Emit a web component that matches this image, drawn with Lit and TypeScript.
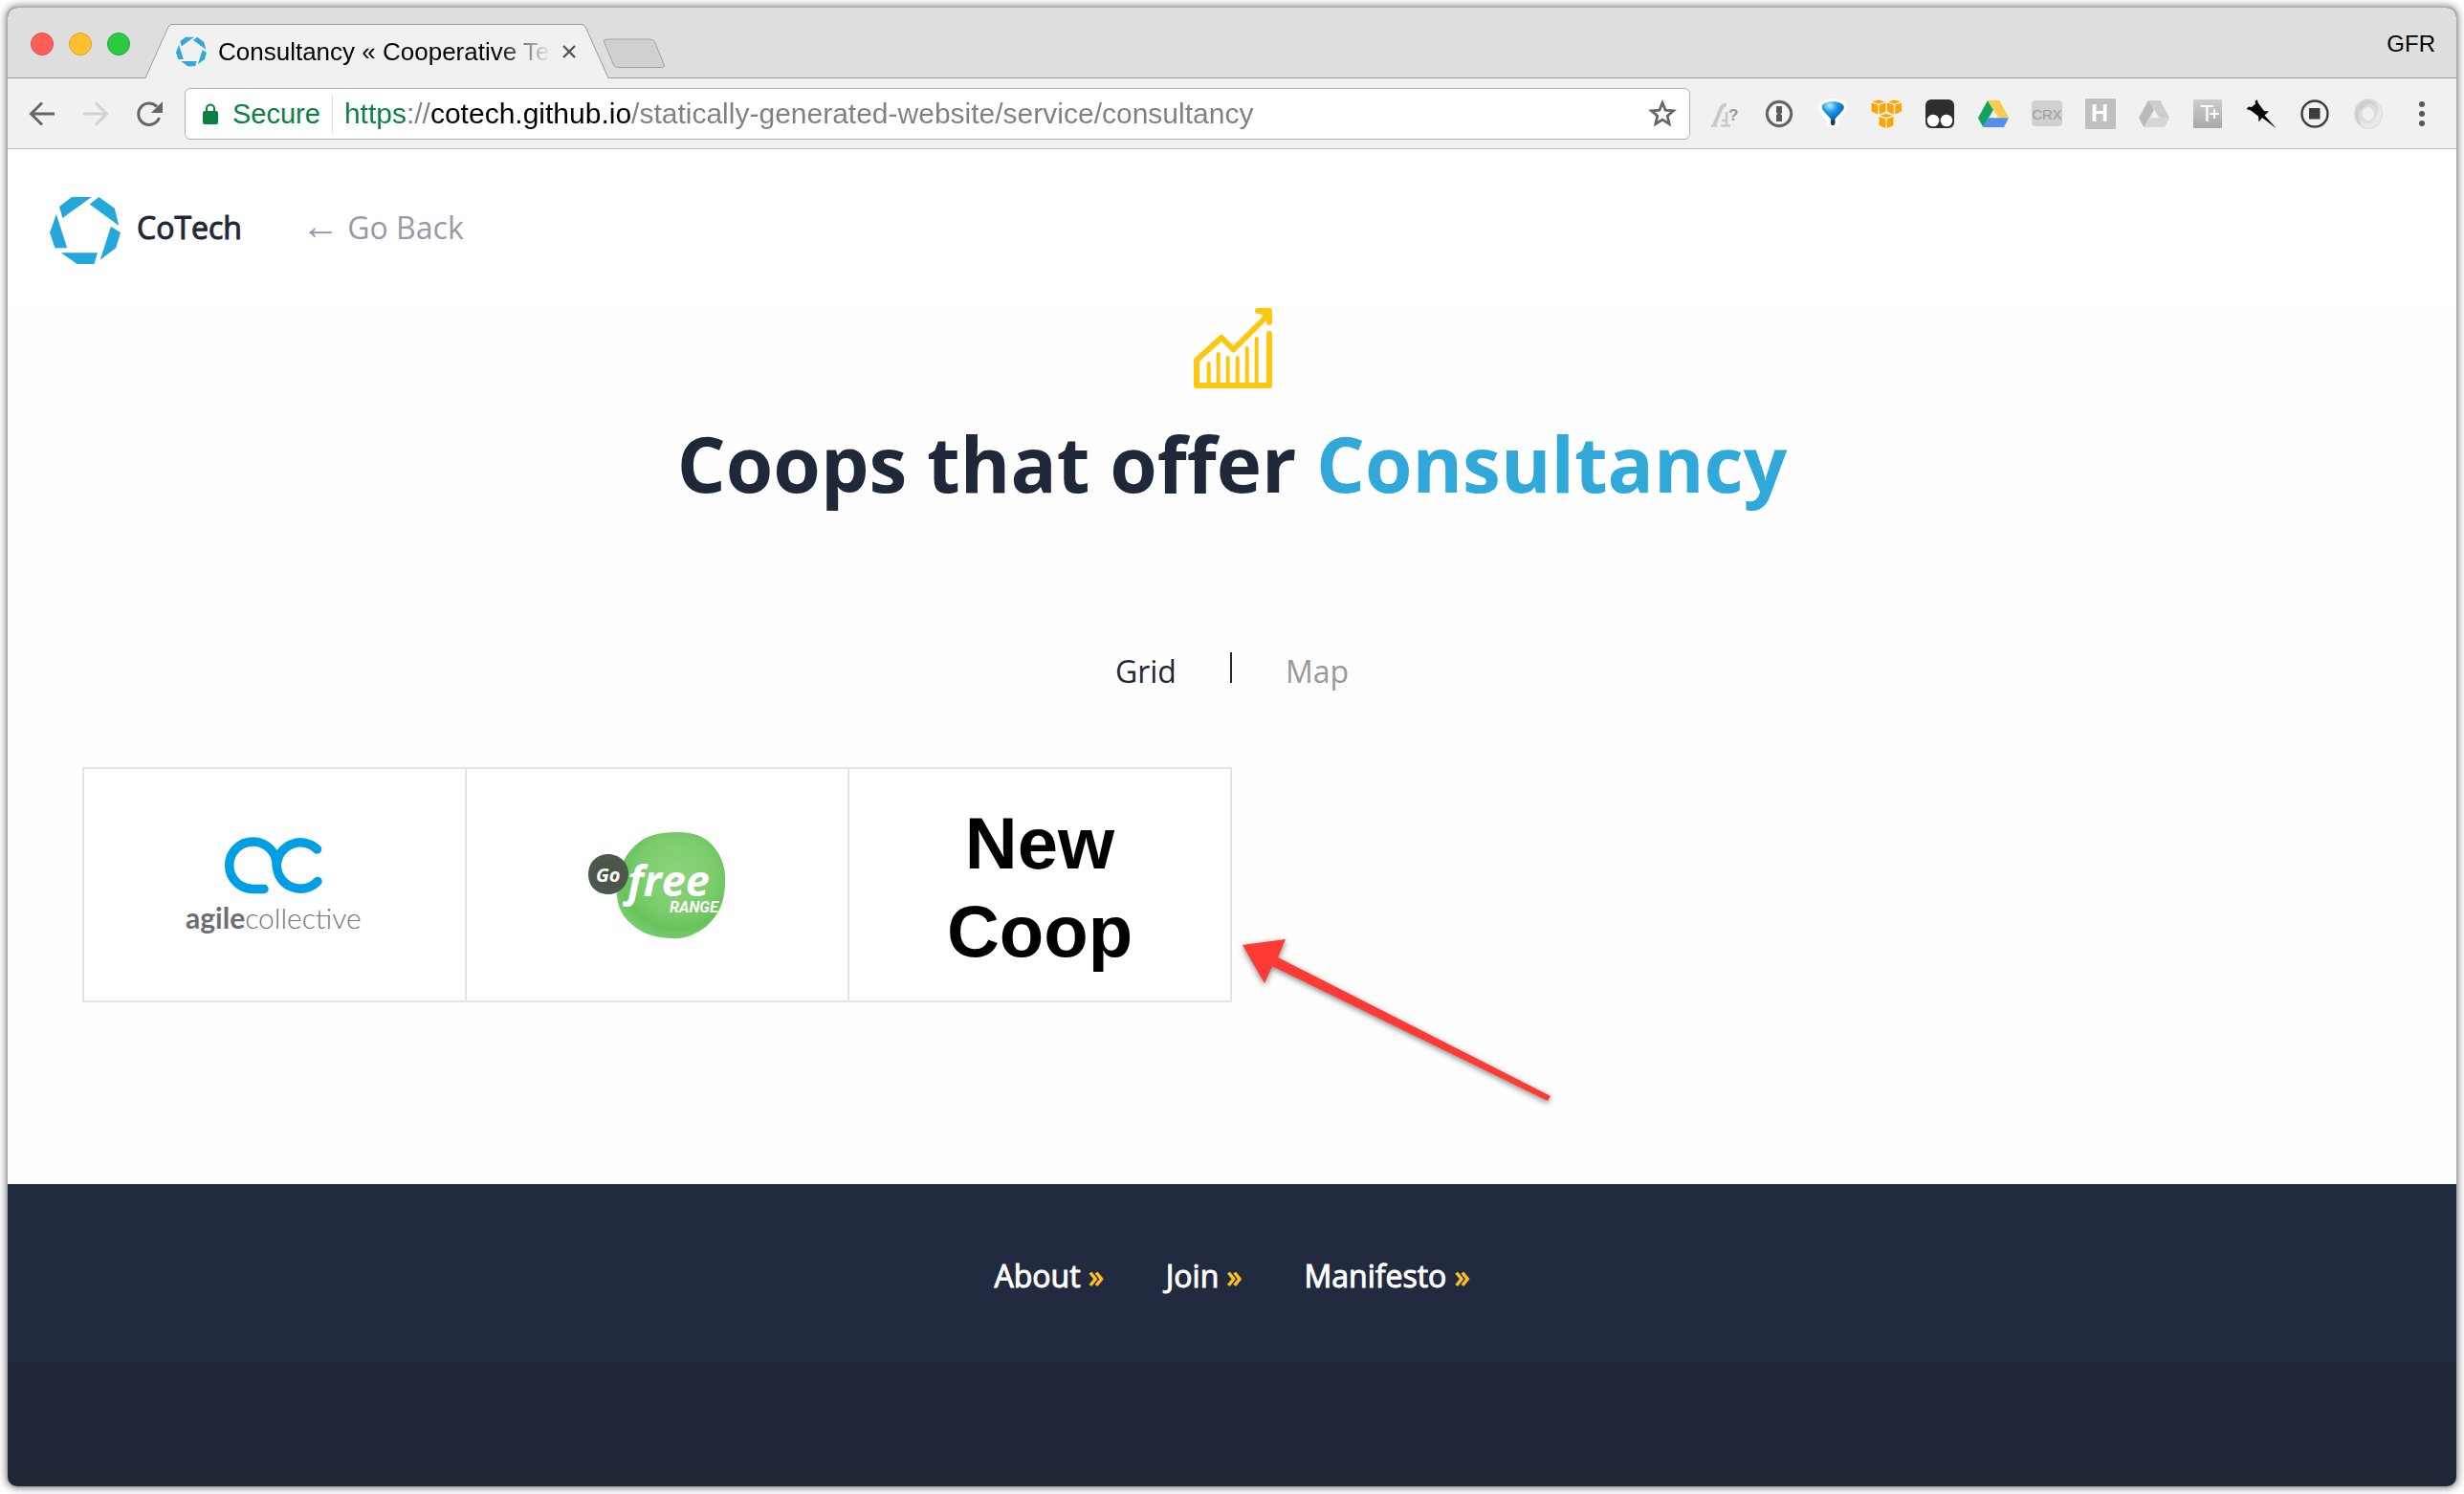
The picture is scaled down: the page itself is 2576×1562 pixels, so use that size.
import { LitElement, html, css, svg } from "lit";
import { customElement, property, state } from "lit/decorators.js";
import { classMap } from "lit/directives/class-map.js";

const ring = svg`
  <polygon points="23,0 43.7,0 13.4,22 10,10" />
  <polygon points="51.3,0 67.8,11.7 72.3,30 41.7,7.5" />
  <polygon points="64,30.7 74,37.3 69.2,53.3 52.7,65.7" />
  <polygon points="11.7,58.3 49.9,58.3 46.5,70 28.6,70" />
  <polygon points="6.9,18 18.2,53.3 5.5,53.3 0,37.3" />`;

const driveShape = (green: string, yellow: string, blue: string) => svg`
  <polygon fill=${green} points="10,2 16,12 5.3,30 0,20.3" />
  <polygon fill=${yellow} points="10,2 22.5,2 32,20 21.5,20.3" />
  <polygon fill=${blue} points="11,20.3 32,20.3 27,30 5.3,30" />`;

const cube = (x: number, y: number) => svg`
  <g transform="translate(${x} ${y})">
    <polygon points="7.5,0 14,1.8 7.5,4 1,1.8" />
    <polygon points="0,3 6.8,5.2 6.8,15 0,12" />
    <polygon points="8.2,5.2 15,3 15,12 8.2,15" />
  </g>`;

const extensions = [
  {
    name: "Font finder",
    art: svg`
      <path d="M4 28.500L11 11Q13 6.500 17 6.500" fill="none" stroke="#c9c9c9" stroke-width="4" />
      <path d="M17 14V28M12 23H18M1 28.500H7M11 28.500H21" fill="none" stroke="#c9c9c9" stroke-width="2.500" />
      <text x="19" y="23" font-size="17" font-weight="700" fill="#999">?</text>`,
  },
  {
    name: "Passwords",
    art: svg`
      <circle cx="16" cy="16" r="12.6" fill="#f7f7f7" stroke="#666" stroke-width="3.2" />
      <path d="M13 8H19V15L17.5 16L19 17.5V24H13V17L14.5 16L13 14.500Z" fill="#5c5c5c" />`,
  },
  {
    name: "Balloon",
    art: svg`
      <path d="M16 0C25 0 31 4 31 9.500C31 16 23 19 21 27Q20 31.500 16 31.500Q12 31.500 11 27C9 19 1 16 1 9.500C1 4 7 0 16 0Z" fill="#fff" />
      <path d="M16 3.300C23 3.300 27.800 6 27.800 9C27.800 14 19 18 17.500 24H15C13.500 18 4.700 14 4.700 9C4.700 6 9 3.300 16 3.300Z" fill="url(#balloon)" />
      <path d="M14 22.500H18.500V26L17.500 28H15L14 26Z" fill="#123a6b" />`,
  },
  {
    name: "Cloud services",
    art: svg`<g fill="#ffa400">${cube(0.5, 1.5)}${cube(17, 1.5)}${cube(8.5, 16)}</g>`,
  },
  {
    name: "User scripts",
    art: svg`
      <rect x="1" y="1" width="30" height="30" rx="6" fill="#2e2e2e" />
      <circle cx="9" cy="23" r="6.300" fill="#fff" />
      <circle cx="23" cy="23" r="6.300" fill="#fff" />`,
  },
  { name: "Drive", art: driveShape("#11a35f", "#fbcb4d", "#548df6") },
  {
    name: "CRX viewer",
    art: svg`
      <rect x="0" y="2" width="32" height="27" rx="4" fill="#d0d0d0" />
      <text x="16" y="21.500" font-size="15" text-anchor="middle" fill="#9c9c9c">CRX</text>`,
  },
  {
    name: "H tools",
    art: svg`
      <rect width="32" height="32" rx="1" fill="#c0c0c0" />
      <text x="15" y="24" font-size="25" font-weight="700" text-anchor="middle" fill="#fff">H</text>`,
  },
  { name: "Drive offline", art: driveShape("#bababa", "#cdcdcd", "#d6d6d6") },
  {
    name: "Text plus",
    art: svg`
      <rect x="1" y="1" width="30" height="30" fill="url(#plate)" />
      <text x="8" y="24" font-size="24" fill="#fff">T</text>
      <path d="M18 16H28M23 11V21" stroke="#fff" stroke-width="2" />`,
  },
  {
    name: "Pinboard",
    art: svg`
      <path d="M0.500 11L3 8.500L6 9L10 5.500L9.500 3L11.500 1L13 5L19 13L24 13.500L19.500 17.500L32 31.500L17 20L13.500 24.500L13 18.500L5 12.500Z" fill="#0a0a0a" />`,
  },
  {
    name: "Recorder",
    art: svg`
      <circle cx="16" cy="16" r="13.500" fill="none" stroke="#3d3d3d" stroke-width="2.400" />
      <rect x="10" y="10" width="11.500" height="11.500" fill="#3d3d3d" />`,
  },
  {
    name: "Swirl",
    art: svg`
      <ellipse cx="16" cy="16" rx="10.500" ry="11.500" fill="none" stroke="#dedede" stroke-width="9" />
      <path d="M16 1A15 15 0 0 0 8 28Q2 16 12 8Q17 4 23 8Q27 11 26 17Q29 6 16 1Z" fill="#c8c8c8" opacity="0.700" />
      <path d="M16 31A15 15 0 0 0 24 4Q30 16 20 24Q15 28 9 24Q7 30 16 31Z" fill="#e8e8e8" />`,
  },
  {
    name: "Menu",
    art: svg`
      <circle cx="16" cy="6" r="3" fill="#595959" />
      <circle cx="16" cy="16" r="3" fill="#595959" />
      <circle cx="16" cy="26" r="3" fill="#595959" />`,
  },
];

@customElement("browser-chrome")
class BrowserChrome extends LitElement {
  @property() address = "";
  @property() heading = "";

  static styles = css`
    :host {
      display: block;
      font-family: "Liberation Sans", Arial, sans-serif;
      color: #000;
    }
    button {
      border: 0;
      padding: 0;
      background: none;
      font: inherit;
      color: inherit;
      display: block;
    }
    svg {
      display: block;
      font-family: "Liberation Sans", Arial, sans-serif;
    }
    .strip {
      box-sizing: border-box;
      height: 74px;
      padding: 3px 22px 0 24px;
      display: flex;
      align-items: center;
      background: #dedede;
      border-bottom: 1px solid #999;
    }
    .lights {
      display: flex;
      gap: 16px;
    }
    .light {
      box-sizing: border-box;
      width: 24px;
      height: 24px;
      border-radius: 50%;
      border: 1px solid #e2483f;
      background: #ff5f57;
    }
    .light.min {
      background: #ffbf2f;
      border-color: #e0a023;
    }
    .light.max {
      background: #29cc41;
      border-color: #1caa2f;
    }
    .tab {
      position: relative;
      align-self: flex-end;
      box-sizing: border-box;
      width: 484px;
      height: 57px;
      margin: 0 0 -1px 16px;
      padding: 0 34px 0 32px;
      display: flex;
      align-items: center;
      gap: 12px;
    }
    .tab-shape {
      position: absolute;
      inset: 0;
    }
    .favicon,
    .tab-title,
    .close {
      position: relative;
    }
    .tab-title {
      flex: 1;
      min-width: 0;
      overflow: hidden;
      white-space: nowrap;
      font-size: 26px;
      line-height: 32px;
      mask-image: linear-gradient(to right, #000 calc(100% - 56px), transparent);
    }
    .new-tab {
      align-self: flex-end;
      margin: 0 0 9px -6px;
    }
    .profile {
      margin-left: auto;
      font-size: 24px;
      line-height: 32px;
    }
    .toolbar {
      box-sizing: border-box;
      height: 74px;
      padding: 0 20px;
      display: flex;
      align-items: center;
      gap: 21px;
      background: #f1f1f1;
      border-bottom: 1px solid #b4b4b4;
    }
    .group {
      display: flex;
      gap: 24px;
    }
    .address {
      flex: 1;
      min-width: 0;
      box-sizing: border-box;
      height: 54px;
      padding: 0 12px 0 18px;
      display: flex;
      align-items: center;
      background: #fff;
      border: 1px solid #b4b4b4;
      border-radius: 6px;
    }
    .secure {
      margin-left: 15px;
      font-size: 29px;
      line-height: 36px;
      color: #0b8043;
    }
    .rule {
      width: 1px;
      height: 40px;
      margin: 0 12px;
      background: #ddd;
    }
    .url {
      flex: 1;
      min-width: 0;
      height: 40px;
      margin: 0;
      border: 0;
      padding: 0;
      outline: 0;
      font: 30px "Liberation Sans", Arial, sans-serif;
      color: transparent;
      caret-color: #000;
      background: linear-gradient(to right, #0b8043 65px, #808080 65px 90px, #000 90px 300px, #808080 300px);
      background-clip: text;
      -webkit-background-clip: text;
    }
  `;

  render() {
    return html`
      <div class="strip">
        <div class="lights">
          <button class="light" aria-label="Close window"></button>
          <button class="light min" aria-label="Minimise window"></button>
          <button class="light max" aria-label="Zoom window"></button>
        </div>
        <div class="tab">
          <svg class="tab-shape" width="484" height="57" viewBox="0 0 484 57" aria-hidden="true">
            <path d="M0 57L24 3Q25.500 0.500 28 0.500H456Q458.500 0.500 460 3L484 57Z" fill="#f1f1f1" />
            <path d="M0 56.500L24 3Q25.500 0.500 28 0.500H456Q458.500 0.500 460 3L484 56.500" fill="none" stroke="#999" />
          </svg>
          <svg class="favicon" width="32" height="32" viewBox="0 0 74 70" fill="#30a9da" aria-hidden="true">${ring}</svg>
          <span class="tab-title">${this.heading}</span>
          <button class="close" aria-label="Close tab">
            <svg width="14" height="14" viewBox="0 0 14 14" stroke="#555" stroke-width="2.400"><path d="M1 1L13 13M13 1L1 13" /></svg>
          </button>
        </div>
        <button class="new-tab" aria-label="New tab">
          <svg width="66" height="32" viewBox="0 0 66 32"><path d="M4 1H50Q53 1 54.500 4L64.500 28Q65 30.500 62 30.500H16Q13 30.500 11.500 28L1.500 4Q1 1 4 1Z" fill="#d0d0d0" stroke="#a2a2a2" /></svg>
        </button>
        <button class="profile">GFR</button>
      </div>
      <div class="toolbar">
        <div class="group">
          <button aria-label="Back">
            <svg width="32" height="32" viewBox="0 0 32 32" fill="none" stroke="#666" stroke-width="3"><path d="M29 16H5M16 4.500L4.500 16L16 27.500" /></svg>
          </button>
          <button aria-label="Forward">
            <svg width="32" height="32" viewBox="0 0 32 32" fill="none" stroke="#d2d2d2" stroke-width="3"><path d="M3 16H27M16 4.500L27.500 16L16 27.500" /></svg>
          </button>
          <button aria-label="Reload">
            <svg width="32" height="32" viewBox="0 0 32 32"><path d="M26.500 20A11.200 11.200 0 1 1 24 8.500" fill="none" stroke="#666" stroke-width="3" /><path d="M30 3V15H18Z" fill="#666" /></svg>
          </button>
        </div>
        <div class="address">
          <svg width="16" height="22" viewBox="0 0 16 22" aria-hidden="true"><rect y="8" width="16" height="14" rx="2" fill="#0b8043" /><path d="M4 9V5.500A4 4 0 0 1 12 5.500V9" fill="none" stroke="#0b8043" stroke-width="2" /></svg>
          <span class="secure">Secure</span>
          <span class="rule"></span>
          <input class="url" type="text" aria-label="Address" .value=${this.address} spellcheck="false" />
          <button aria-label="Bookmark this page">
            <svg width="32" height="32" viewBox="0 0 32 32"><path d="M16 4.500L19.200 12.200L27.500 12.900L21.200 18.300L23.100 26.500L16 22.100L8.900 26.500L10.800 18.300L4.500 12.900L12.800 12.200Z" fill="none" stroke="#666" stroke-width="2.800" /></svg>
          </button>
        </div>
        <div class="group">
          ${extensions.map(
            (item) => html`<button aria-label=${item.name}>
              <svg width="32" height="32" viewBox="0 0 32 32">
                <defs>
                  <radialGradient id="balloon" cx="0.35" cy="0.2" r="0.8">
                    <stop offset="0" stop-color="#c9ecff" />
                    <stop offset="0.4" stop-color="#1a9df0" />
                    <stop offset="1" stop-color="#0a4f9e" />
                  </radialGradient>
                  <linearGradient id="plate" x2="0" y2="1">
                    <stop offset="0" stop-color="#cdcdcd" />
                    <stop offset="1" stop-color="#a8a8a8" />
                  </linearGradient>
                </defs>
                ${item.art}
              </svg>
            </button>`
          )}
        </div>
      </div>
    `;
  }
}

const agileLogo = html`
  <svg width="190" height="112" viewBox="0 0 190 112" role="img" aria-label="agilecollective">
    <g fill="none" stroke="#009fe3" stroke-width="9.500" stroke-linecap="round">
      <path d="M84 60.500H72.500A24.800 24.800 0 1 1 97.300 35.700A24.800 24.800 0 0 0 140 52.500" />
      <path d="M97.300 35.700A24.800 24.800 0 0 1 139.500 19" />
    </g>
    <text x="2" y="102" class="agile-text"><tspan class="heavy">agile</tspan><tspan class="thin">collective</tspan></text>
  </svg>`;

const freeLogo = html`
  <svg width="146" height="114" viewBox="0 0 146 114" role="img" aria-label="Go free range">
    <defs>
      <radialGradient id="leaf" cx="0.55" cy="0.4" r="0.6">
        <stop offset="0" stop-color="#8bd57c" />
        <stop offset="0.6" stop-color="#7bcc6c" />
        <stop offset="0.85" stop-color="#68c25c" />
        <stop offset="1" stop-color="#74cb68" />
      </radialGradient>
      <radialGradient id="coal">
        <stop offset="0" stop-color="#465043" />
        <stop offset="1" stop-color="#4f584d" />
      </radialGradient>
    </defs>
    <path d="M92 2C110 1.500 123 6 132 17C141 28 145 40 144 57C143 77 137 89 124 101C113 109 103 114 87 113C70 112 57 108 46 98C34 88 30 75 31 60C32 39 40 23 56 11C67 4 78 2.500 92 2Z" fill="url(#leaf)" />
    <path d="M20 25C32 24 43 33 43 45C43 57 34 67 22 67C9 67 1 58 1 46C1 34 9 26 20 25Z" fill="url(#coal)" />
    <g class="free-text">
      <text x="9" y="54" font-size="20">Go</text>
      <text x="42" y="69" font-size="45">free</text>
      <text x="86" y="86" class="range">RANGE</text>
    </g>
  </svg>`;

const arrow = html`
  <svg class="arrow" width="334" height="180" viewBox="0 0 334 180" aria-hidden="true">
    <path d="M1 10L46 4L38 23L323 168L320 173L32 32L24 50Z" fill="#fd3a33" />
  </svg>`;

const coops = [
  { href: "#agile-collective", art: agileLogo, pointed: false },
  { href: "#go-free-range", art: freeLogo, pointed: false },
  { href: "#new-coop", art: html`<span class="plain">New<br />Coop</span>`, pointed: true },
];

@customElement("app-root")
class AppRoot extends LitElement {
  @state() private view = "Grid";

  static styles = css`
    :host {
      display: block;
      background: #fff;
      font-family: "Open Sans", "Noto Sans", sans-serif;
      font-size: 32px;
      color: #1f2739;
    }
    a {
      color: inherit;
      text-decoration: none;
    }
    svg {
      display: block;
    }
    .page {
      box-sizing: border-box;
      min-height: 100vh;
      padding: 8px;
      display: flex;
      flex-direction: column;
    }
    .window {
      flex: 1;
      display: flex;
      flex-direction: column;
      overflow: hidden;
      border-radius: 10px;
      background: #212637;
      box-shadow: 0 0 0 1px #aaa, 0 0 8px 1px rgba(0, 0, 0, 0.6);
    }
    .top {
      padding: 50px 44px 46px;
      display: flex;
      line-height: 64px;
      background: #fff;
    }
    .brand {
      display: flex;
      gap: 17px;
    }
    .firm {
      -webkit-text-stroke: 1px currentColor;
    }
    .back {
      margin-left: 62px;
      color: #9599a8;
    }
    .back .sign {
      font-family: "Liberation Serif", serif;
      font-size: 40px;
      line-height: 32px;
    }
    main {
      background: #fefefe;
      padding-bottom: 190px;
    }
    .chart {
      margin: 0 auto;
    }
    h1 {
      margin: 30px 0 150px;
      text-align: center;
      font-size: 80px;
      line-height: 96px;
      font-weight: 700;
    }
    h1 em {
      font-style: normal;
      color: #30a9da;
    }
    .views {
      display: flex;
      justify-content: center;
      gap: 56px;
      margin-bottom: 80px;
    }
    .view {
      border: 0;
      padding: 0;
      background: none;
      font: inherit;
      line-height: 40px;
      color: #999;
    }
    .view.on {
      color: #1f2739;
    }
    .bar {
      width: 2px;
      height: 32px;
      background: #1f2739;
    }
    .coops {
      list-style: none;
      margin: 0;
      padding: 0 80px;
      display: grid;
      grid-template-columns: repeat(6, 1fr);
    }
    .coop {
      position: relative;
      box-sizing: border-box;
      height: 246px;
      margin-left: -2px;
      border: 2px solid #e4e4e0;
      background: #fff;
    }
    .coop a {
      height: 100%;
      display: flex;
      align-items: center;
      justify-content: center;
    }
    .plain {
      padding-top: 6px;
      text-align: center;
      font: 700 76px/92px "Liberation Sans", Arial, sans-serif;
      color: #000;
    }
    .agile-text {
      font-family: Lato, sans-serif;
      font-size: 30px;
      fill: #75757d;
    }
    .heavy {
      font-weight: 700;
      fill: #6d6d75;
    }
    .thin {
      font-weight: 300;
    }
    .free-text {
      font-family: "Open Sans", sans-serif;
      font-weight: 700;
      font-style: italic;
      fill: #fff;
    }
    .range {
      font-family: "Liberation Sans Narrow", Roboto, sans-serif;
      font-size: 16px;
    }
    .arrow {
      position: absolute;
      left: calc(100% + 12px);
      top: 174px;
      z-index: 1;
      filter: drop-shadow(0 2px 3px rgba(0, 0, 0, 0.5));
    }
    .links {
      display: flex;
      justify-content: center;
      gap: 65px;
      padding: 76px 0 70px;
      line-height: 40px;
      background: #222a3f;
      color: #fff;
    }
    .mark {
      color: #ffc227;
    }
  `;

  render() {
    return html`
      <div class="page">
        <div class="window">
          <browser-chrome
            heading="Consultancy « Cooperative Tec"
            address="https://cotech.github.io/statically-generated-website/service/consultancy"
          ></browser-chrome>
          <header class="top">
            <a class="brand" href="#home">
              <svg width="74" height="70" viewBox="0 0 74 70" fill="#24a8dc" aria-hidden="true">${ring}</svg>
              <span class="firm">CoTech</span>
            </a>
            <a class="back" href="#back"><span class="sign">←</span> Go Back</a>
          </header>
          <main>
            <svg class="chart" width="84" height="84" viewBox="-2 0 84 84" fill="none" stroke="#ffc60f" stroke-linecap="round" stroke-linejoin="round" aria-hidden="true">
              <path d="M79 27V81H3V54.500L29 31L41.500 43.500L76 9" stroke-width="6" />
              <path d="M67 3H79V15" stroke-width="6" />
              <path d="M67 3H79V15Z" fill="#ffc60f" stroke="none" />
              <path d="M15.700 58V80M25.700 48V80M35.700 52V80M45.700 52V80M55.700 42V80M65.700 32V80" stroke-width="4" />
            </svg>
            <h1>Coops that offer <em>Consultancy</em></h1>
            <div class="views">
              <button class=${classMap({ view: true, on: this.view === "Grid" })} @click=${() => (this.view = "Grid")}>Grid</button>
              <span class="bar"></span>
              <button class=${classMap({ view: true, on: this.view === "Map" })} @click=${() => (this.view = "Map")}>Map</button>
            </div>
            <ul class="coops">
              ${coops.map(
                (coop) => html`<li class="coop"><a href=${coop.href}>${coop.art}</a>${coop.pointed ? arrow : ""}</li>`
              )}
            </ul>
          </main>
          <footer class="links">
            ${["About", "Join", "Manifesto"].map(
              (name) => html`<a href="#${name.toLowerCase()}"><span class="firm">${name}</span> <span class="mark firm">»</span></a>`
            )}
          </footer>
        </div>
      </div>
    `;
  }
}
